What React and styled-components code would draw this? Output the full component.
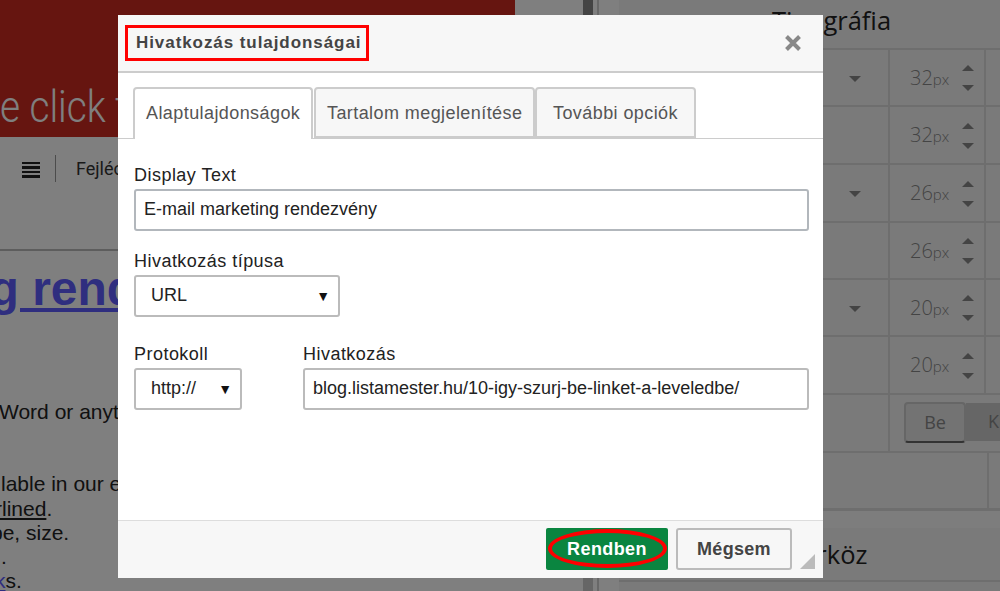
import React from "react";
import styled, { createGlobalStyle } from "styled-components";

const Global = createGlobalStyle`
  html, body { margin: 0; padding: 0; height: 591px; overflow: hidden; background: #fff; }
  * { box-sizing: border-box; }
  #root { width: 1000px; height: 591px; position: relative; overflow: hidden; font-family: "Liberation Sans", Arial, sans-serif; }
`;

const Page = styled.div`display: flex; width: 1000px; height: 591px; background: #fff;`;
const Editor = styled.div`width: 583px; flex: none; display: flex; flex-direction: column; overflow: hidden;`;
const BannerRow = styled.div`height: 137px; flex: none; display: flex;`;
const Banner = styled.div`
  width: 515px; background: #cc2a20; color: #fff; overflow: hidden; padding-top: 77px;
  font: 300 45px/60px Roboto, sans-serif; white-space: nowrap;
`;
const BannerText = styled.span`display: inline-block; transform: scaleX(0.86); transform-origin: left center;`;
const Toolbar = styled.div`
  height: 114px; flex: none; border-bottom: 2px solid #bbb; display: flex; align-items: flex-start; padding: 18px 0 0 22px;
`;
const Bars = styled.div`
  width: 18px; height: 16px; margin-top: 7px; flex: none;
  background: repeating-linear-gradient(#222 0 2.5px, transparent 2.5px 4.5px);
`;
const Sep = styled.div`width: 1px; height: 27px; background: #999; margin: 0 20px 0 15px;`;
const ToolText = styled.span`font: 18px/27px Roboto, sans-serif; color: #333;`;
const Content = styled.div`flex: 1; color: #222; font-size: 21px; line-height: 24.3px; white-space: nowrap;`;
const Heading = styled.a`
  display: block; font: bold 48px/56px "Liberation Sans", sans-serif; color: #5f5cff; text-decoration: underline;
  margin: 10px 0 83px -368px;
`;
const Line = styled.p`margin: ${(p) => p.$top || 0}px 0 0 ${(p) => p.$left || 0}px;`;
const Under = styled.span`text-decoration: underline;`;
const LinkText = styled.span`color: #5f5cff; text-decoration: underline;`;

const Splitter = styled.div`width: 36px; flex: none; display: flex; background: #fff;`;
const Thumb = styled.div`width: 10px; background: linear-gradient(#888 0 300px, #ccc 300px); flex: none;`;
const Gap = styled.div`width: 4px; flex: none; background: #fff;`;
const Rule = styled.div`width: 2px; flex: none; background: #d0d0d0;`;

const Panel = styled.div`flex: 1; background: #f5f5f5; display: flex; flex-direction: column; overflow: hidden;`;
const PanelTitle = styled.div`
  height: ${(p) => p.$h}px; flex: none; font: 25.5px/${(p) => p.$lh}px "Open Sans", sans-serif; color: #222;
  padding-left: ${(p) => p.$left}px; border-bottom: 2px solid #ddd; white-space: nowrap;
`;
const Row = styled.div`
  height: ${(p) => p.$h}px; flex: none; display: grid; grid-template-columns: ${(p) => p.$cols || "271px 96px 1fr"};
  border-bottom: ${(p) => p.$thick || 2}px solid #ddd;
`;
const Cell = styled.div`
  border-right: 2px solid #ddd; display: flex; align-items: center; position: relative; min-width: 0; overflow: hidden;
  &:last-child { border-right: 0; }
`;
const CaretCell = styled(Cell)`justify-content: flex-end; padding: 2px 27px 0 0;`;
const Caret = styled.span`
  width: 0; height: 0; border-left: 6px solid transparent; border-right: 6px solid transparent;
  border-${(p) => (p.$up ? "bottom" : "top")}: 6px solid #888; display: block;
`;
const SizeCell = styled(Cell)`padding: 1px 0 0 20px; justify-content: flex-start;`;
const Size = styled.span`font: 300 20px/24px "Open Sans", sans-serif; color: #888; width: 46px; flex: none;`;
const Unit = styled.span`font-size: 15px;`;
const Spin = styled.div`display: flex; flex-direction: column; gap: 14px; margin-left: 6px;`;
const Toggle = styled.div`display: flex; width: 100%; padding-left: 14px; height: 42px;`;
const ToggleOn = styled.div`
  width: 62px; height: 41px; flex: none; border: 2px solid #ccc; border-bottom: 2px solid #666; border-radius: 4px; background: #e6e6e6;
  font: 18px/36px "Open Sans", sans-serif; color: #888; text-align: center;
`;
const ToggleOff = styled.div`
  flex: 1; height: 38px; background: #ccc; font: 18px/36px "Open Sans", sans-serif; color: #888; padding-left: 22px; margin-top: 1px;
`;
const Band = styled.div`height: 17px; flex: none; background: #fafafa;`;

const Overlay = styled.div`position: absolute; inset: 0; background: rgba(0, 0, 0, 0.5);`;
const Modal = styled.div`
  position: absolute; left: 118px; top: 15px; width: 705px; height: 563px; background: #fff; display: flex; flex-direction: column;
`;
const Header = styled.div`
  height: 58px; flex: none; background: #f7f7f7; border-bottom: 2px solid #ccc; display: flex; align-items: center;
  justify-content: space-between; padding: 0 21px 0 7px;
`;
const TitleBox = styled.div`
  border: 3px solid #f00; height: 36px; width: 244px; padding-left: 8px; white-space: nowrap;
  font: bold 17px/30px "Liberation Sans", sans-serif; color: #444; letter-spacing: 0.93px;
`;
const Close = styled.button`border: 0; padding: 0; background: none; width: 18px; height: 18px; display: block;`;
const Tabs = styled.div`
  height: 52px; margin-top: 14px; flex: none; border-bottom: 1px solid #ccc; display: flex; padding-left: 15px;
`;
const Tab = styled.div`
  width: ${(p) => p.$w}px; height: ${(p) => (p.$active ? 52 : 51)}px; border: 2px solid #ccc; border-bottom: ${(p) => (p.$active ? 0 : "2px solid #ccc")};
  border-radius: 4px 4px 0 0; background: ${(p) => (p.$active ? "#fff" : "#f7f7f7")}; color: #555; font-size: 18px; line-height: 49px;
  padding-left: ${(p) => p.$pad || 11}px; letter-spacing: 0.42px; margin-right: ${(p) => p.$mr || 0}px; white-space: nowrap; flex: none;
`;
const Body = styled.div`flex: 1; padding: 26px 14px 0 16px; display: flex; flex-direction: column;`;
const Field = styled.div`display: flex; flex-direction: column; margin-top: ${(p) => p.$top || 0}px; flex: ${(p) => (p.$grow ? 1 : "none")};`;
const Label = styled.label`font-size: 18px; line-height: 20px; color: #222; letter-spacing: 0.47px; height: 24px; white-space: nowrap;`;
const TextBox = styled.div`
  height: 42px; border: 2px solid ${(p) => p.$c || "#b2b7bc"}; border-radius: 3px; background: #fff; color: #222;
  font-size: 18px; line-height: 36px; padding-left: 8px; white-space: nowrap; overflow: hidden;
`;
const SelectBox = styled.div`
  height: 42px; width: ${(p) => p.$w}px; border: 2px solid #bbb; border-radius: 3px; background: #fff; color: #222;
  font-size: 18px; line-height: 36px; padding: 0 8px 0 15px; display: flex; justify-content: space-between;
`;
const Arrow = styled.span`font-size: 14px; line-height: 38px; color: #111;`;
const Columns = styled.div`display: flex; gap: 61px; margin-top: 27px;`;
const Footer = styled.div`
  height: 58px; flex: none; background: #f7f7f7; border-top: 1px solid #ddd; display: flex; padding: 7px 0 0 428px; gap: 8px; position: relative;
`;
const OkButton = styled.button`
  position: relative; width: 122px; height: 42px; border: 0; border-radius: 2px; background: #0a8540; color: #fff;
  font: bold 18px "Liberation Sans", sans-serif; letter-spacing: 0.4px; padding: 1px 0 0;
`;
const Ring = styled.span`
  position: absolute; left: 2px; top: 1px; right: 1px; bottom: 2px; border: 4px solid #f00; border-radius: 50%;
`;
const CancelButton = styled.button`
  width: 116px; height: 42px; border: 2px solid #bbb; border-radius: 3px; background: #f7f7f7; color: #444;
  font: bold 18px "Liberation Sans", sans-serif; letter-spacing: 0.3px; padding: 0;
`;
const Resize = styled.div`
  position: absolute; right: 8px; bottom: 9px; width: 15px; height: 15px; background: #bbb; clip-path: polygon(100% 0, 100% 100%, 0 100%);
`;

const sizes = [["32", true], ["32", false], ["26", true], ["26", false], ["20", true], ["20", false]];
const heights = [57, 58, 58, 57, 57, 58];

export default function App() {
  return (
    <>
      <Global />
      <Page>
        <Editor>
          <BannerRow><Banner><BannerText>e click to edit</BannerText></Banner></BannerRow>
          <Toolbar><Bars /><Sep /><ToolText>Fejléc</ToolText></Toolbar>
          <Content>
            <Heading>E-mail marketing rendezvény</Heading>
            <Line $left={-1}>Word or anything else</Line>
            <Line $top={48} $left={1}>lable in our editor</Line>
            <Line $left={-5}><Under>rlined</Under>.</Line>
            <Line $left={-9}>pe, size.</Line>
            <Line $left={1}>.</Line>
            <Line $left={-5}><LinkText>k</LinkText>s.</Line>
          </Content>
        </Editor>
        <Splitter><Thumb /><Gap /><Rule /></Splitter>
        <Panel>
          <PanelTitle $h={50} $lh={40} $left={153}>Tipográfia</PanelTitle>
          {sizes.map(([v, caret], i) => (
            <Row key={i} $h={heights[i]}>
              {caret ? <CaretCell><Caret /></CaretCell> : <Cell />}
              <SizeCell>
                <Size>{v}<Unit>px</Unit></Size>
                <Spin><Caret $up /><Caret /></Spin>
              </SizeCell>
              <Cell />
            </Row>
          ))}
          <Row $h={58} $cols="271px 1fr">
            <Cell />
            <Cell><Toggle><ToggleOn>Be</ToggleOn><ToggleOff>Ki</ToggleOff></Toggle></Cell>
          </Row>
          <Row $h={58} $thick={3} $cols="370px 1fr"><Cell /><Cell /></Row>
          <Band />
          <PanelTitle $h={54} $lh={52} $left={169}>Térköz</PanelTitle>
        </Panel>
      </Page>
      <Overlay />
      <Modal>
        <Header>
          <TitleBox>Hivatkozás tulajdonságai</TitleBox>
          <Close aria-label="close">
            <svg width="18" height="18" viewBox="0 0 18 18">
              <path d="M2.5 2.5 L15.5 15.5 M15.5 2.5 L2.5 15.5" stroke="#888" strokeWidth="4" />
            </svg>
          </Close>
        </Header>
        <Tabs>
          <Tab $w={180} $active $mr={1}>Alaptulajdonságok</Tab>
          <Tab $w={221}>Tartalom megjelenítése</Tab>
          <Tab $w={161} $pad={16}>További opciók</Tab>
        </Tabs>
        <Body>
          <Field>
            <Label>Display Text</Label>
            <TextBox>E-mail marketing rendezvény</TextBox>
          </Field>
          <Field $top={20}>
            <Label>Hivatkozás típusa</Label>
            <SelectBox $w={206}>URL<Arrow>▼</Arrow></SelectBox>
          </Field>
          <Columns>
            <Field>
              <Label>Protokoll</Label>
              <SelectBox $w={108}>http://<Arrow>▼</Arrow></SelectBox>
            </Field>
            <Field $grow>
              <Label>Hivatkozás</Label>
              <TextBox $c="#bbb">blog.listamester.hu/10-igy-szurj-be-linket-a-leveledbe/</TextBox>
            </Field>
          </Columns>
        </Body>
        <Footer>
          <OkButton>Rendben<Ring /></OkButton>
          <CancelButton>Mégsem</CancelButton>
          <Resize />
        </Footer>
      </Modal>
    </>
  );
}
